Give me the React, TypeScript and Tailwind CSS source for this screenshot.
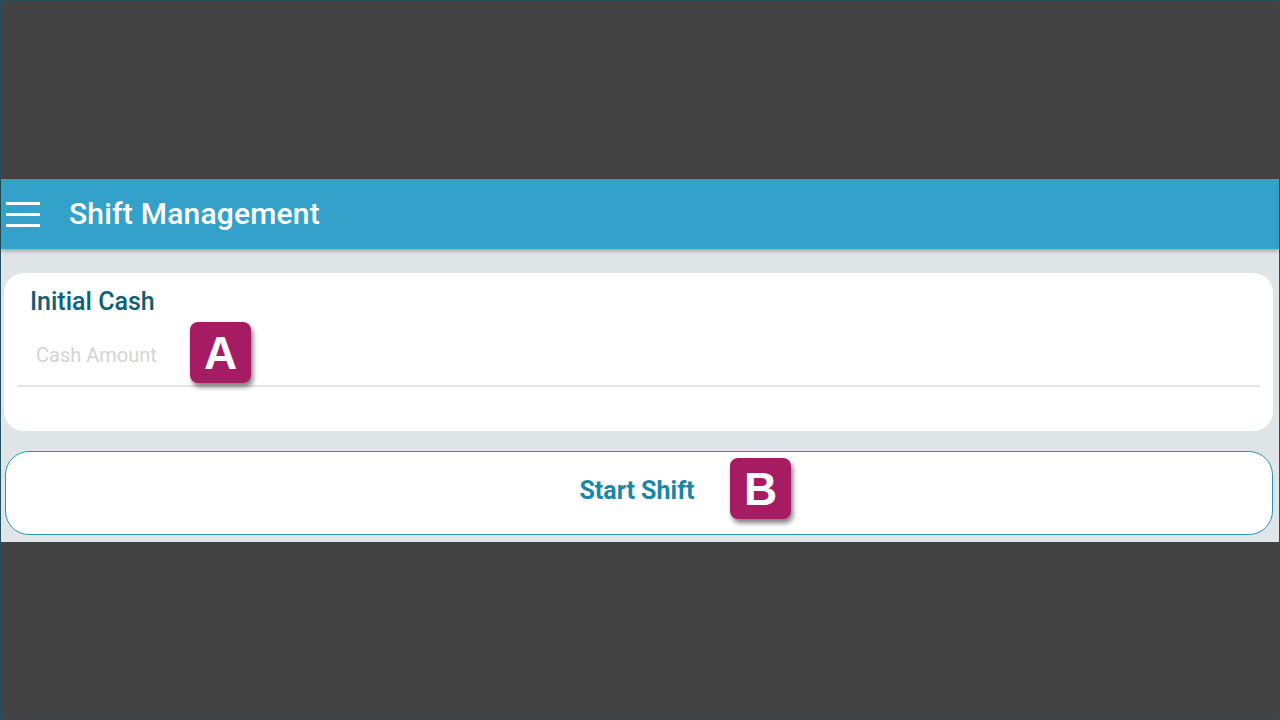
import React from "react";

export default function App() {
  return (
    <div className="w-[1280px] h-[720px] bg-[#434343] border border-[#22505e] flex flex-col" style={{ fontFamily: "Roboto, 'Liberation Sans', sans-serif" }}>
      <div className="h-[178px]" />
      <div className="flex flex-col h-[363px] bg-[#e0e5e8]">
        <div className="h-[70px] bg-[#33a1c9] flex items-center shadow-[0_2px_4px_rgba(0,0,0,0.3)] relative z-10">
          <div className="w-[34px] ml-[5px] flex flex-col gap-[8px]">
            <div className="h-[3px] bg-white" />
            <div className="h-[3px] bg-white" />
            <div className="h-[3px] bg-white" />
          </div>
          <div className="ml-[29px] text-white text-[30px] font-medium leading-none tracking-[0.2px]">Shift Management</div>
        </div>
        <div className="flex flex-col pt-[24px] pl-[3px] pr-[6px] gap-[20px]">
          <div className="relative h-[158px] bg-white rounded-[20px] pt-[14px]">
            <div className="ml-[26px] text-[25px] font-medium text-[#0e6079] leading-[30px]">Initial Cash</div>
            <div className="mx-[13px] mt-[12px] h-[58px] border-b-2 border-[#e5e5e5] flex items-center pl-[19px]">
              <span className="text-[20px] text-[#d4d4d4] -mt-[4px]">Cash Amount</span>
            </div>
            <div className="absolute left-[186px] top-[49px] w-[61px] h-[61px] rounded-[8px] bg-[#a51c63] shadow-[2px_4px_5px_rgba(0,0,0,0.5)] flex items-center justify-center text-white text-[46px] font-bold leading-none" style={{ fontFamily: "'Liberation Sans', Arial, sans-serif" }}>A</div>
          </div>
          <div className="relative h-[84px] ml-[1px] bg-white rounded-[24px] border border-[#2b93b5] flex items-center justify-center">
            <span className="text-[25px] font-bold text-[#1a86a8] -ml-[4px] -mt-[4px]">Start Shift</span>
            <div className="absolute left-[724px] top-[6px] w-[61px] h-[61px] rounded-[8px] bg-[#a51c63] shadow-[2px_4px_5px_rgba(0,0,0,0.5)] flex items-center justify-center text-white text-[46px] font-bold leading-none" style={{ fontFamily: "'Liberation Sans', Arial, sans-serif" }}>B</div>
          </div>
        </div>
      </div>
    </div>
  );
}
